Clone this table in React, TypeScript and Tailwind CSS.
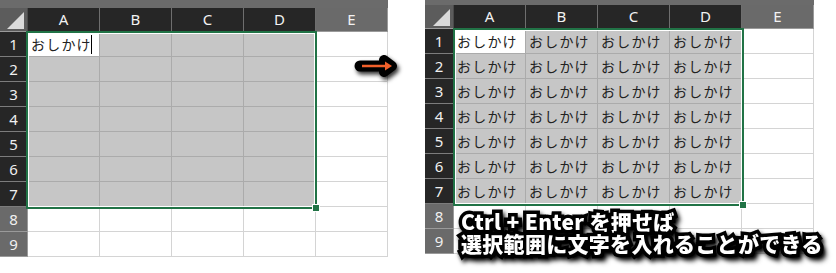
import React from "react";

const COLS = ["A", "B", "C", "D", "E"];
const ROWS = [1, 2, 3, 4, 5, 6, 7, 8, 9];

type SheetProps = {
  bandClass: string;
  cornerClass: string;
  overlayClass: string;
  filled: boolean;
  cursor: boolean;
};

function Corner({ cornerClass }: { cornerClass: string }) {
  return (
    <div className={`${cornerClass} h-full shrink-0 bg-[#5c5c5c] border-r border-[#4a4a4a] flex items-end justify-end pr-[3px] pb-[2px]`}>
      <svg width="17" height="17" viewBox="0 0 17 17">
        <polygon points="0,17 17,17 17,0" fill="#dadada" />
      </svg>
    </div>
  );
}

function Sheet({ bandClass, cornerClass, overlayClass, filled, cursor }: SheetProps) {
  const textCls =
    "font-['Noto_Sans_CJK_JP',sans-serif] text-[14px] tracking-[1.2px] text-[#222222] whitespace-nowrap leading-none";
  return (
    <div className="relative flex flex-col shrink-0">
      <div className={`${bandClass} bg-[#6b6b6b]`} />
      <div className="flex h-[24px] border-b border-[#9a9a9a]">
        <Corner cornerClass={cornerClass} />
        {COLS.map((c, i) => (
          <div
            key={c}
            className={`w-[72px] h-full flex items-center justify-center border-r font-['Noto_Sans',sans-serif] text-[15px] ${
              i < 4
                ? "bg-[#262626] text-[#f2f2f2] border-[#6e6e6e]"
                : "bg-[#6a6a6a] text-[#f2f2f2] border-[#9a9a9a]"
            }`}
          >
            {c}
          </div>
        ))}
      </div>
      {ROWS.map((r) => {
        const selRow = r <= 7;
        return (
          <div key={r} className="flex h-[25px]">
            <div
              className={`${cornerClass} h-full shrink-0 flex items-center justify-center border-b border-r font-['Noto_Sans',sans-serif] text-[15px] text-[#f0f0f0] ${
                selRow ? "bg-[#262626] border-[#7c7c7c]" : "bg-[#6a6a6a] border-[#9a9a9a]"
              }`}
            >
              {r}
            </div>
            {COLS.map((c, i) => {
              const sel = selRow && i < 4;
              const active = r === 1 && i === 0;
              const hasText = active || (filled && sel);
              return (
                <div
                  key={c}
                  className={`w-[72px] h-full flex items-center pl-[3px] border-r border-b ${
                    sel
                      ? active
                        ? "bg-white border-[#ababab]"
                        : "bg-[#c6c6c6] border-[#ababab]"
                      : "bg-white border-[#d4d4d4]"
                  }`}
                >
                  {hasText && <span className={textCls}>おしかけ</span>}
                  {active && cursor && <span className="ml-[-1px] w-px h-[19px] bg-black" />}
                </div>
              );
            })}
          </div>
        );
      })}
      <div className={`absolute ${overlayClass} w-[291px] h-[178px] border-2 border-[#217346] shadow-[inset_0_0_0_1px_#ffffff]`}>
        <div className="absolute right-[-4px] bottom-[-4px] w-[6px] h-[6px] bg-[#217346] outline outline-1 outline-white" />
      </div>
    </div>
  );
}

export default function App() {
  return (
    <div className="relative w-[836px] h-[273px] bg-white overflow-hidden">
      <div className="flex items-start">
        <Sheet
          bandClass="h-[8px]"
          cornerClass="w-[28px]"
          overlayClass="left-[26px] top-[31px]"
          filled={false}
          cursor={true}
        />
        <div className="w-[37px] shrink-0" />
        <Sheet
          bandClass="h-[5px]"
          cornerClass="w-[29px]"
          overlayClass="left-[28px] top-[28px]"
          filled={true}
          cursor={false}
        />
      </div>

      <svg
        className="absolute left-[350px] top-[50px] drop-shadow-[2px_3px_2px_rgba(0,0,0,0.8)]"
        width="52"
        height="34"
        viewBox="0 0 52 34"
      >
        <line x1="10" y1="16" x2="38" y2="16" stroke="#000" strokeWidth="11" strokeLinecap="round" />
        <polyline
          points="34,10 42,16 34,22"
          fill="none"
          stroke="#000"
          strokeWidth="10"
          strokeLinecap="round"
          strokeLinejoin="round"
        />
        <line x1="12" y1="16" x2="38" y2="16" stroke="#f2602b" strokeWidth="2.5" />
        <polygon points="35,11.5 42,16 35,20.5" fill="#f2602b" />
      </svg>

      <div className="absolute left-[461px] top-[210px] font-['Noto_Sans_CJK_JP',sans-serif] font-black text-[21px] leading-[22px] tracking-[0.3px] text-white whitespace-nowrap [-webkit-text-stroke:7px_black] [paint-order:stroke_fill] [text-shadow:3px_3px_0_#000,4px_4px_3px_rgba(0,0,0,0.8)] drop-shadow-[2px_3px_2px_rgba(0,0,0,0.9)]">
        <div>Ctrl + Enter を押せば</div>
        <div>選択範囲に文字を入れることができる</div>
      </div>
    </div>
  );
}
